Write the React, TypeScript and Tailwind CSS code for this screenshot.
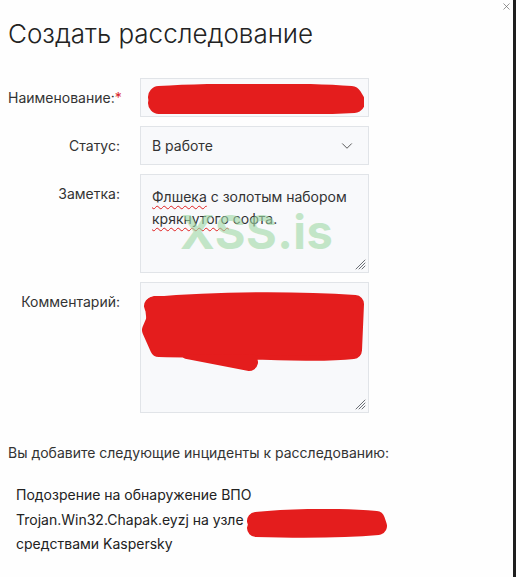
import React from 'react';
import { ChevronDown, X } from 'lucide-react';

const font = { fontFamily: 'Inter, "Noto Sans", sans-serif' };

function ResizeHandle() {
  return (
    <svg className="absolute right-[2px] bottom-[2px]" width="12" height="12" viewBox="0 0 12 12">
      <g stroke="#6b6f75" strokeWidth="1" strokeLinecap="round">
        <line x1="11" y1="2" x2="2" y2="11" />
        <line x1="11" y1="5" x2="5" y2="11" />
        <line x1="11" y1="8" x2="8" y2="11" />
      </g>
    </svg>
  );
}

function Scribble({ className, d, width, height, stroke }: { className: string; d: string; width: number; height: number; stroke: number }) {
  return (
    <svg className={`absolute ${className}`} width={width} height={height} viewBox={`0 0 ${width} ${height}`}>
      <path d={d} fill="none" stroke="#e41d1d" strokeWidth={stroke} strokeLinecap="round" strokeLinejoin="round" />
    </svg>
  );
}

function Row({ label, required, children }: { label: string; required?: boolean; children: React.ReactNode }) {
  return (
    <div className="flex items-start gap-[20px]">
      <div className="w-[112px] shrink-0 whitespace-nowrap pt-[10px] text-right text-[14px] leading-[20px] text-[#333]">
        {label}
        {required && <span className="text-[#d9262b]">*</span>}
      </div>
      <div className="relative w-[229px]">{children}</div>
    </div>
  );
}

export default function App() {
  return (
    <div className="relative flex min-h-screen w-[516px] bg-[#fefefe]" style={font}>
      <div className="flex-1 pl-[8px] pt-[18px] text-[#333]">
        <h1 className="text-[26px] font-light leading-[32px] text-[#222]">Создать расследование</h1>

        <div className="mt-[28px] flex flex-col gap-[9px]">
          <Row label="Наименование:" required>
            <div className="h-[39px] border border-[#e1e4e8] bg-[#f8f9fb]" />
            <Scribble className="left-[8px] top-[6px]" width={216} height={30} stroke={22} d="M11 13 C60 10, 150 9, 203 13 L206 18 C150 21, 80 21, 11 19" />
          </Row>

          <Row label="Статус:">
            <div className="flex h-[39px] items-center justify-between border border-[#e1e4e8] bg-[#f8f9fb] pl-[11px] pr-[12px] text-[14px]">
              <span>В работе</span>
              <ChevronDown size={18} strokeWidth={1.3} color="#555" />
            </div>
          </Row>

          <Row label="Заметка:">
            <div className="relative h-[99px] border border-[#e1e4e8] bg-[#f8f9fb] px-[11px] pt-[11px] text-[14px] leading-[22px]">
              <span className="underline decoration-[#e02020] decoration-wavy decoration-1 underline-offset-[3px]">Флшека</span> с золотым набором{' '}
              <span className="underline decoration-[#e02020] decoration-wavy decoration-1 underline-offset-[3px]">крякнутого</span> софта.
              <ResizeHandle />
            </div>
            <div className="pointer-events-none absolute left-[40px] top-[33px] text-[47px] font-bold leading-[50px] tracking-[0.5px] text-[#9fd9a6] opacity-60">
              XSS.is
            </div>
          </Row>

          <Row label="Комментарий:">
            <div className="relative h-[131px] border border-[#e1e4e8] bg-[#f8f9fb]">
              <ResizeHandle />
            </div>
            <Scribble
              className="left-[-3px] top-[8px]"
              width={232}
              height={86}
              stroke={18}
              d="M16 16 C80 10, 160 10, 218 14 L216 60 C180 64, 120 60, 22 58 L14 40 L20 26 L212 30 M20 44 L210 46 M50 60 L112 72"
            />
            <Scribble
              className="left-[-3px] top-[8px]"
              width={232}
              height={86}
              stroke={20}
              d="M18 16 L214 16 L214 56 L22 54 Z M30 30 L200 30 M30 42 L200 42"
            />
          </Row>
        </div>

        <p className="mt-[30px] text-[14px] leading-[20px] text-[#333]">Вы добавите следующие инциденты к расследованию:</p>

        <div className="relative mt-[20px] pl-[8px] text-[14px] leading-[24.5px] text-[#222]">
          <div>Подозрение на обнаружение ВПО</div>
          <div>Trojan.Win32.Chapak.eyzj на узле</div>
          <div>средствами Kaspersky</div>
          <Scribble className="left-[236px] top-[26px]" width={146} height={30} stroke={18} d="M12 12 C50 8, 100 8, 132 11 L134 17 C100 20, 50 20, 12 19" />
        </div>
      </div>

      <X className="absolute right-[4px] top-[1px]" size={11} strokeWidth={1.5} color="#666" />
      <div className="w-[3px] shrink-0 bg-[#1f1f1f]" />
    </div>
  );
}
